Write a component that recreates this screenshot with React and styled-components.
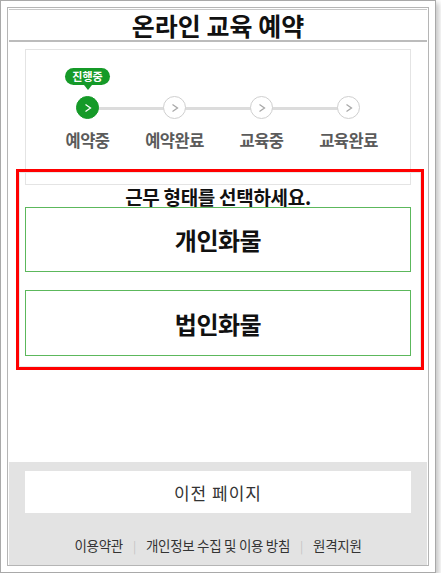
import React from "react";
import styled, { createGlobalStyle } from "styled-components";

const Global = createGlobalStyle`
  html, body { margin: 0; padding: 0; background: #fff; }
  body { font-family: "Noto Sans CJK KR", "Noto Sans", sans-serif; }
  * { box-sizing: border-box; }
`;

const Frame = styled.div`
  position: relative;
  width: 436px;
  height: 573px;
  border: 1px solid #a9a9a9;
  background: #fff;
  padding: 6px;
  box-shadow: 3px 3px 5px rgba(0, 0, 0, 0.22);
`;

const Inner = styled.div`
  height: 559px;
  border: 1px solid #b5b5b5;
  display: flex;
  flex-direction: column;
`;

const Header = styled.header`
  margin: 1px 0 0 1px;
  width: 418px;
  border-top: 1px solid #c8c8c8;
  border-bottom: 2px solid #bcbcbc;
  text-align: center;
`;

const Title = styled.h1`
  margin: 0;
  font-size: 25px;
  font-weight: 700;
  line-height: 30px;
  color: #111;
  letter-spacing: 0;
`;

const StepCard = styled.div`
  margin: 7px 17px 0;
  height: 136px;
  border: 1px solid #e4e4e4;
  display: flex;
  justify-content: center;
  padding-top: 18px;
`;

const Steps = styled.ol`
  list-style: none;
  margin: 0;
  padding: 0;
  display: grid;
  grid-template-columns: repeat(4, 87px);
`;

const Step = styled.li`
  position: relative;
  display: flex;
  flex-direction: column;
  align-items: center;
  &::before {
    content: "";
    display: ${(p) => (p.$first ? "none" : "block")};
    position: absolute;
    top: 39px;
    left: -43px;
    width: 87px;
    height: 3px;
    background: #dcdcdc;
  }
`;

const Badge = styled.span`
  position: relative;
  height: 17px;
  padding: 0 7px;
  border-radius: 9px;
  background: #159a28;
  color: #fff;
  font-size: 11px;
  font-weight: 700;
  line-height: 17px;
  visibility: ${(p) => (p.$hidden ? "hidden" : "visible")};
  &::after {
    content: "";
    position: absolute;
    left: 50%;
    bottom: -5px;
    margin-left: -4px;
    border-left: 4px solid transparent;
    border-right: 4px solid transparent;
    border-top: 5px solid #159a28;
  }
`;

const Circle = styled.span`
  position: relative;
  z-index: 1;
  margin-top: 11px;
  width: 23px;
  height: 23px;
  border-radius: 50%;
  display: flex;
  align-items: center;
  justify-content: center;
  background: ${(p) => (p.$active ? "#159a28" : "#fff")};
  border: 1.5px solid ${(p) => (p.$active ? "#159a28" : "#cfcfcf")};
  color: ${(p) => (p.$active ? "#fff" : "#a8a8a8")};
`;

const StepLabel = styled.span`
  margin-top: 9px;
  font-size: 16.5px;
  font-weight: 700;
  color: #5b5b5b;
  white-space: nowrap;
  letter-spacing: -0.5px;
`;

const ChoiceTitle = styled.h2`
  margin: 2px 0 0;
  text-align: center;
  font-size: 19px;
  font-weight: 700;
  line-height: 20px;
  color: #111;
  letter-spacing: -0.3px;
`;

const Choices = styled.div`
  margin: 0 17px;
  display: flex;
  flex-direction: column;
  gap: 18px;
`;

const ChoiceButton = styled.button`
  height: ${(p) => p.$h}px;
  border: 1px solid #5cb85c;
  background: #fff;
  font-family: inherit;
  font-size: 24px;
  font-weight: 700;
  color: #111;
  letter-spacing: -0.5px;
  cursor: pointer;
`;

const Footer = styled.footer`
  margin: auto 1px 0;
  height: 103px;
  background: #e3e3e3;
  padding: 9px 16px 0;
  display: flex;
  flex-direction: column;
  align-items: stretch;
`;

const PrevButton = styled.button`
  height: 42px;
  border: none;
  background: #fff;
  font-family: inherit;
  font-size: 17px;
  color: #333;
  letter-spacing: 1px;
`;

const Links = styled.nav`
  margin-top: 22px;
  display: flex;
  justify-content: center;
  align-items: center;
  gap: 10px;
  font-size: 13.5px;
  color: #333;
  letter-spacing: -0.3px;
`;

const Sep = styled.span`
  color: #c4c4c4;
  font-size: 12px;
`;

const Highlight = styled.div`
  position: absolute;
  left: 15px;
  top: 168px;
  width: 408px;
  height: 201px;
  border: 3px solid #ff0000;
  box-shadow: inset 0 0 0 1px #e8e8e8;
  pointer-events: none;
`;

function Chevron() {
  return (
    <svg width="10" height="10" viewBox="0 0 10 10" fill="none">
      <path d="M2.5 1.5 L7.5 5 L2.5 8.5" stroke="currentColor" strokeWidth="1.3" />
    </svg>
  );
}

const steps = ["예약중", "예약완료", "교육중", "교육완료"];

export default function App() {
  return (
    <>
      <Global />
      <Frame>
        <Inner>
          <Header>
            <Title>온라인 교육 예약</Title>
          </Header>
          <StepCard>
            <Steps>
              {steps.map((s, i) => (
                <Step key={s} $first={i === 0}>
                  <Badge $hidden={i !== 0}>진행중</Badge>
                  <Circle $active={i === 0}>
                    <Chevron />
                  </Circle>
                  <StepLabel>{s}</StepLabel>
                </Step>
              ))}
            </Steps>
          </StepCard>
          <ChoiceTitle>근무 형태를 선택하세요.</ChoiceTitle>
          <Choices>
            <ChoiceButton $h={65}>개인화물</ChoiceButton>
            <ChoiceButton $h={66}>법인화물</ChoiceButton>
          </Choices>
          <Footer>
            <PrevButton>이전 페이지</PrevButton>
            <Links>
              <span>이용약관</span>
              <Sep>|</Sep>
              <span>개인정보 수집 및 이용 방침</span>
              <Sep>|</Sep>
              <span>원격지원</span>
            </Links>
          </Footer>
        </Inner>
        <Highlight />
      </Frame>
    </>
  );
}
